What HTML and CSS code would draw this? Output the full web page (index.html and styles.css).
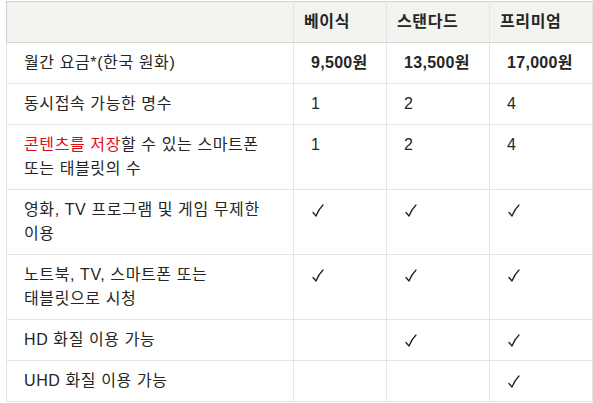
FILE: index.html
```html
<!DOCTYPE html>
<html lang="ko">
<head>
<meta charset="utf-8">
<link rel="stylesheet" href="styles.css">
</head>
<body>
<table class="plans">
  <colgroup>
    <col class="c-feature">
    <col class="c-basic">
    <col class="c-std">
    <col class="c-prem">
  </colgroup>
  <thead>
    <tr>
      <th></th>
      <th>베이식</th>
      <th>스탠다드</th>
      <th>프리미엄</th>
    </tr>
  </thead>
  <tbody>
    <tr class="price">
      <td>월간 요금*(한국 원화)</td>
      <td><b>9,500원</b></td>
      <td><b>13,500원</b></td>
      <td><b>17,000원</b></td>
    </tr>
    <tr>
      <td>동시접속 가능한 명수</td>
      <td>1</td>
      <td>2</td>
      <td>4</td>
    </tr>
    <tr>
      <td><span class="hl">콘텐츠를 저장</span>할 수 있는 스마트폰<br>또는 태블릿의 수</td>
      <td>1</td>
      <td>2</td>
      <td>4</td>
    </tr>
    <tr>
      <td>영화, TV 프로그램 및 게임 무제한<br>이용</td>
      <td><svg class="chk" viewBox="0 0 12 13"><path d="M1 8.5 L4 12 Q6.5 5.5 11 1"/></svg></td>
      <td><svg class="chk" viewBox="0 0 12 13"><path d="M1 8.5 L4 12 Q6.5 5.5 11 1"/></svg></td>
      <td><svg class="chk" viewBox="0 0 12 13"><path d="M1 8.5 L4 12 Q6.5 5.5 11 1"/></svg></td>
    </tr>
    <tr>
      <td>노트북, TV, 스마트폰 또는<br>태블릿으로 시청</td>
      <td><svg class="chk" viewBox="0 0 12 13"><path d="M1 8.5 L4 12 Q6.5 5.5 11 1"/></svg></td>
      <td><svg class="chk" viewBox="0 0 12 13"><path d="M1 8.5 L4 12 Q6.5 5.5 11 1"/></svg></td>
      <td><svg class="chk" viewBox="0 0 12 13"><path d="M1 8.5 L4 12 Q6.5 5.5 11 1"/></svg></td>
    </tr>
    <tr>
      <td>HD 화질 이용 가능</td>
      <td></td>
      <td><svg class="chk" viewBox="0 0 12 13"><path d="M1 8.5 L4 12 Q6.5 5.5 11 1"/></svg></td>
      <td><svg class="chk" viewBox="0 0 12 13"><path d="M1 8.5 L4 12 Q6.5 5.5 11 1"/></svg></td>
    </tr>
    <tr>
      <td>UHD 화질 이용 가능</td>
      <td></td>
      <td></td>
      <td><svg class="chk" viewBox="0 0 12 13"><path d="M1 8.5 L4 12 Q6.5 5.5 11 1"/></svg></td>
    </tr>
  </tbody>
</table>
</body>
</html>
```
FILE: styles.css
```css
html, body {
  margin: 0;
  padding: 0;
  background: #fff;
}
body {
  font-family: "Liberation Sans", "Noto Sans CJK KR", sans-serif;
  font-size: 16px;
  letter-spacing: 0.6px;
  color: #262626;
}
.plans {
  margin: 1px 0 0 6px;
  width: 586px;
  table-layout: fixed;
  border-collapse: collapse;
  border: 1px solid #cfcfcf;
}
.c-feature { width: 287px; }
.c-basic { width: 93px; }
.c-std { width: 103px; }
.c-prem { width: 103px; }
.plans th,
.plans td {
  border: 1px solid #e4e4e4;
  text-align: left;
  vertical-align: top;
  line-height: 24px;
  padding: 8px 10px 8px 17px;
}
.plans thead th {
  background: #f3f3ef;
  font-weight: 700;
  padding: 8px 10px;
  border-bottom: 1px solid #d6d6d6;
  border-top: 1px solid #cfcfcf;
}
.plans thead th:first-child { border-left: 1px solid #cfcfcf; }
.plans td b { font-weight: 700; letter-spacing: 0.3px; }
.hl { color: #e50914; }
.chk {
  display: block;
  width: 12px;
  height: 13px;
  margin: 6px 0 5px 1px;
  fill: none;
  stroke: #222;
  stroke-width: 1.3;
  stroke-linecap: round;
  stroke-linejoin: round;
}
```
